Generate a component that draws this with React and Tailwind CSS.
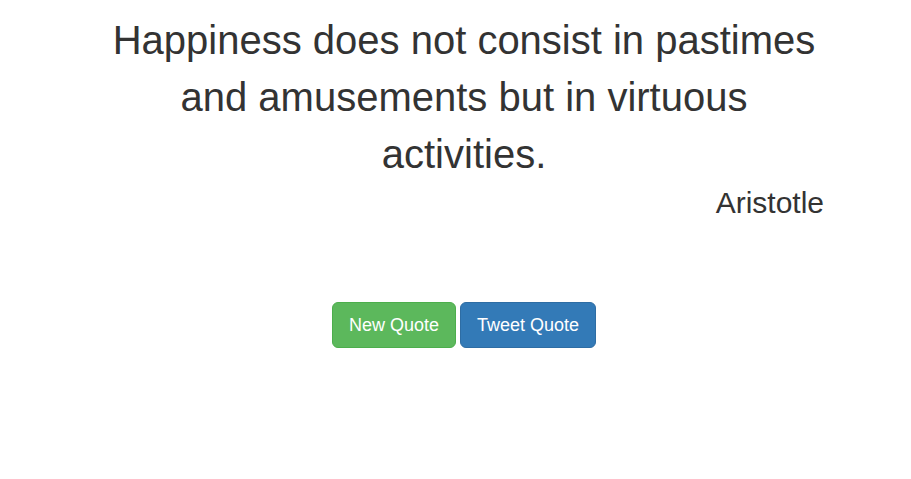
import React from "react";

const QuoteBox = () => {
    return (
        <div className="min-h-screen bg-white font-['Liberation_Sans',Arial,sans-serif] text-[#333]">
            <div className="w-[720px] ml-[104px] pt-[12px]">
                <p className="text-[40px] leading-[1.42857] text-center">
                    Happiness does not consist in pastimes and amusements but in virtuous activities.
                </p>
                <p className="text-[30px] leading-[40px] text-right">Aristotle</p>
                <div className="flex justify-center gap-1 mt-[79px]">
                    <button className="bg-[#5cb85c] border border-[#4cae4c] text-white text-[18px] leading-[24px] px-4 py-[10px] rounded-[6px]">
                        New Quote
                    </button>
                    <button className="bg-[#337ab7] border border-[#2e6da4] text-white text-[18px] leading-[24px] px-4 py-[10px] rounded-[6px]">
                        Tweet Quote
                    </button>
                </div>
            </div>
        </div>
    );
};

export default function App() {
    return <QuoteBox />;
}
